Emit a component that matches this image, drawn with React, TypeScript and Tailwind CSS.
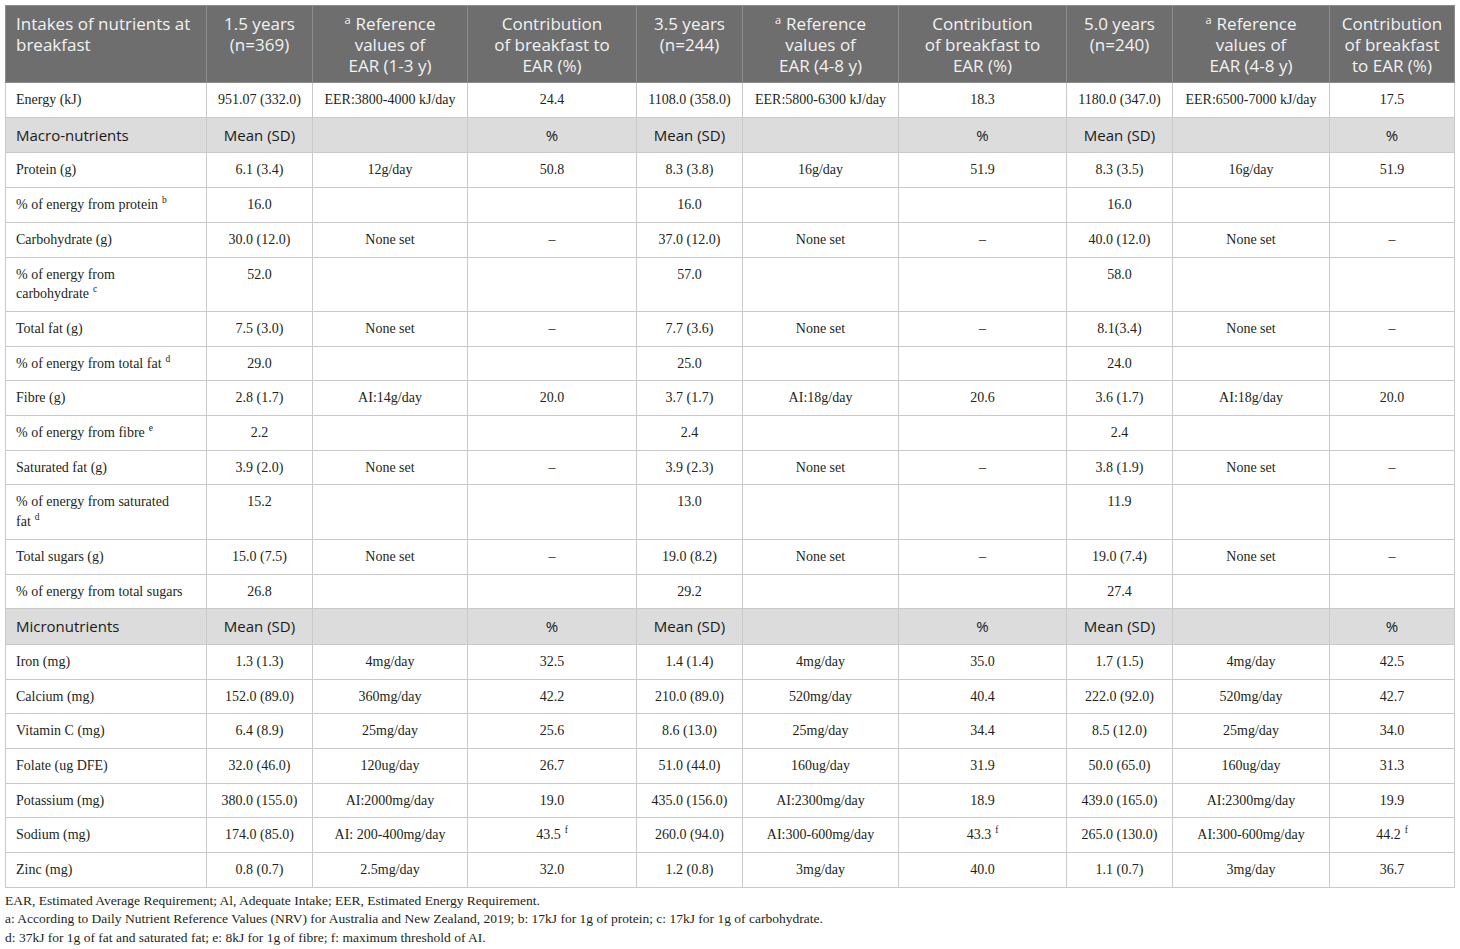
import React from "react";

type Cell = React.ReactNode;

const serif = "font-['Liberation_Serif','Times_New_Roman',serif]";
const sans = "font-['Open_Sans','Noto_Sans',sans-serif]";

const Sup = ({ c }: { c: string }) => (
  <span className="relative -top-[6px] ml-[4px] align-baseline text-[9.5px] leading-none">{c}</span>
);

const HSup = () => (
  <span className="relative -top-[6px] mr-[5px] align-baseline text-[11px] leading-none">a</span>
);

const widths = [
  "w-[201px]",
  "w-[106px]",
  "w-[155px]",
  "w-[169px]",
  "w-[106px]",
  "w-[156px]",
  "w-[168px]",
  "w-[106px]",
  "w-[157px]",
  "w-[125px]",
];

const header: Cell[] = [
  <>Intakes of nutrients at<br />breakfast</>,
  <>1.5 years<br />(n=369)</>,
  <><HSup />Reference<br />values of<br />EAR (1-3 y)</>,
  <>Contribution<br />of breakfast to<br />EAR (%)</>,
  <>3.5 years<br />(n=244)</>,
  <><HSup />Reference<br />values of<br />EAR (4-8 y)</>,
  <>Contribution<br />of breakfast to<br />EAR (%)</>,
  <>5.0 years<br />(n=240)</>,
  <><HSup />Reference<br />values of<br />EAR (4-8 y)</>,
  <>Contribution<br />of breakfast<br />to EAR (%)</>,
];

type Row = { section?: boolean; cells: Cell[] };

const D = "–";

const rows: Row[] = [
  { cells: ["Energy (kJ)", "951.07 (332.0)", "EER:3800-4000 kJ/day", "24.4", "1108.0 (358.0)", "EER:5800-6300 kJ/day", "18.3", "1180.0 (347.0)", "EER:6500-7000 kJ/day", "17.5"] },
  { section: true, cells: ["Macro-nutrients", "Mean (SD)", "", "%", "Mean (SD)", "", "%", "Mean (SD)", "", "%"] },
  { cells: ["Protein (g)", "6.1 (3.4)", "12g/day", "50.8", "8.3 (3.8)", "16g/day", "51.9", "8.3 (3.5)", "16g/day", "51.9"] },
  { cells: [<>% of energy from protein<Sup c="b" /></>, "16.0", "", "", "16.0", "", "", "16.0", "", ""] },
  { cells: ["Carbohydrate (g)", "30.0 (12.0)", "None set", D, "37.0 (12.0)", "None set", D, "40.0 (12.0)", "None set", D] },
  { cells: [<>% of energy from<br />carbohydrate<Sup c="c" /></>, "52.0", "", "", "57.0", "", "", "58.0", "", ""] },
  { cells: ["Total fat (g)", "7.5 (3.0)", "None set", D, "7.7 (3.6)", "None set", D, "8.1(3.4)", "None set", D] },
  { cells: [<>% of energy from total fat<Sup c="d" /></>, "29.0", "", "", "25.0", "", "", "24.0", "", ""] },
  { cells: ["Fibre (g)", "2.8 (1.7)", "AI:14g/day", "20.0", "3.7 (1.7)", "AI:18g/day", "20.6", "3.6 (1.7)", "AI:18g/day", "20.0"] },
  { cells: [<>% of energy from fibre<Sup c="e" /></>, "2.2", "", "", "2.4", "", "", "2.4", "", ""] },
  { cells: ["Saturated fat (g)", "3.9 (2.0)", "None set", D, "3.9 (2.3)", "None set", D, "3.8 (1.9)", "None set", D] },
  { cells: [<>% of energy from saturated<br />fat<Sup c="d" /></>, "15.2", "", "", "13.0", "", "", "11.9", "", ""] },
  { cells: ["Total sugars (g)", "15.0 (7.5)", "None set", D, "19.0 (8.2)", "None set", D, "19.0 (7.4)", "None set", D] },
  { cells: ["% of energy from total sugars", "26.8", "", "", "29.2", "", "", "27.4", "", ""] },
  { section: true, cells: ["Micronutrients", "Mean (SD)", "", "%", "Mean (SD)", "", "%", "Mean (SD)", "", "%"] },
  { cells: ["Iron (mg)", "1.3 (1.3)", "4mg/day", "32.5", "1.4 (1.4)", "4mg/day", "35.0", "1.7 (1.5)", "4mg/day", "42.5"] },
  { cells: ["Calcium (mg)", "152.0 (89.0)", "360mg/day", "42.2", "210.0 (89.0)", "520mg/day", "40.4", "222.0 (92.0)", "520mg/day", "42.7"] },
  { cells: ["Vitamin C (mg)", "6.4 (8.9)", "25mg/day", "25.6", "8.6 (13.0)", "25mg/day", "34.4", "8.5 (12.0)", "25mg/day", "34.0"] },
  { cells: ["Folate (ug DFE)", "32.0 (46.0)", "120ug/day", "26.7", "51.0 (44.0)", "160ug/day", "31.9", "50.0 (65.0)", "160ug/day", "31.3"] },
  { cells: ["Potassium (mg)", "380.0 (155.0)", "AI:2000mg/day", "19.0", "435.0 (156.0)", "AI:2300mg/day", "18.9", "439.0 (165.0)", "AI:2300mg/day", "19.9"] },
  { cells: ["Sodium (mg)", "174.0 (85.0)", "AI: 200-400mg/day", <>43.5<Sup c="f" /></>, "260.0 (94.0)", "AI:300-600mg/day", <>43.3<Sup c="f" /></>, "265.0 (130.0)", "AI:300-600mg/day", <>44.2<Sup c="f" /></>] },
  { cells: ["Zinc (mg)", "0.8 (0.7)", "2.5mg/day", "32.0", "1.2 (0.8)", "3mg/day", "40.0", "1.1 (0.7)", "3mg/day", "36.7"] },
];

export default function App() {
  return (
    <div className="min-h-[949px] w-[1460px] bg-white pl-[5px] pt-[5px] text-[#231f20]">
      <table className="table-fixed border-collapse w-[1450px]">
        <colgroup>
          {widths.map((w, i) => (
            <col key={i} className={w} />
          ))}
        </colgroup>
        <thead>
          <tr className="bg-[#6e6e6e]">
            {header.map((h, i) => (
              <th
                key={i}
                className={`${sans} border border-[#8c8c8c] px-[10px] pt-[7px] pb-[6px] align-top text-[17px] font-normal leading-[21px] text-[#f2f2f2] ${
                  i === 0 ? "text-left" : "text-center"
                }`}
              >
                {h}
              </th>
            ))}
          </tr>
        </thead>
        <tbody>
          {rows.map((r, ri) => (
            <tr key={ri} className={r.section ? "bg-[#dcdcdc]" : "bg-white"}>
              {r.cells.map((c, ci) => (
                <td
                  key={ci}
                  className={`border border-[#c9c9c9] px-[10px] align-top ${
                    r.section
                      ? `${sans} pt-[7px] pb-[7px] text-[15px] leading-[20.7px] text-[#1a1a1a]`
                      : `${serif} py-[7px] text-[14px] leading-[19.7px]`
                  } ${ci === 0 ? "text-left" : "text-center"}`}
                >
                  {c}
                </td>
              ))}
            </tr>
          ))}
        </tbody>
      </table>
      <div className={`${serif} mt-[4px] text-[13.5px] leading-[18.5px] text-[#231f20]`}>
        <p>EAR, Estimated Average Requirement; Al, Adequate Intake; EER, Estimated Energy Requirement.</p>
        <p>
          a: According to Daily Nutrient Reference Values (NRV) for Australia and New Zealand, 2019; b: 17kJ for 1g of protein; c: 17kJ for 1g of carbohydrate.
        </p>
        <p>d: 37kJ for 1g of fat and saturated fat; e: 8kJ for 1g of fibre; f: maximum threshold of AI.</p>
      </div>
    </div>
  );
}
